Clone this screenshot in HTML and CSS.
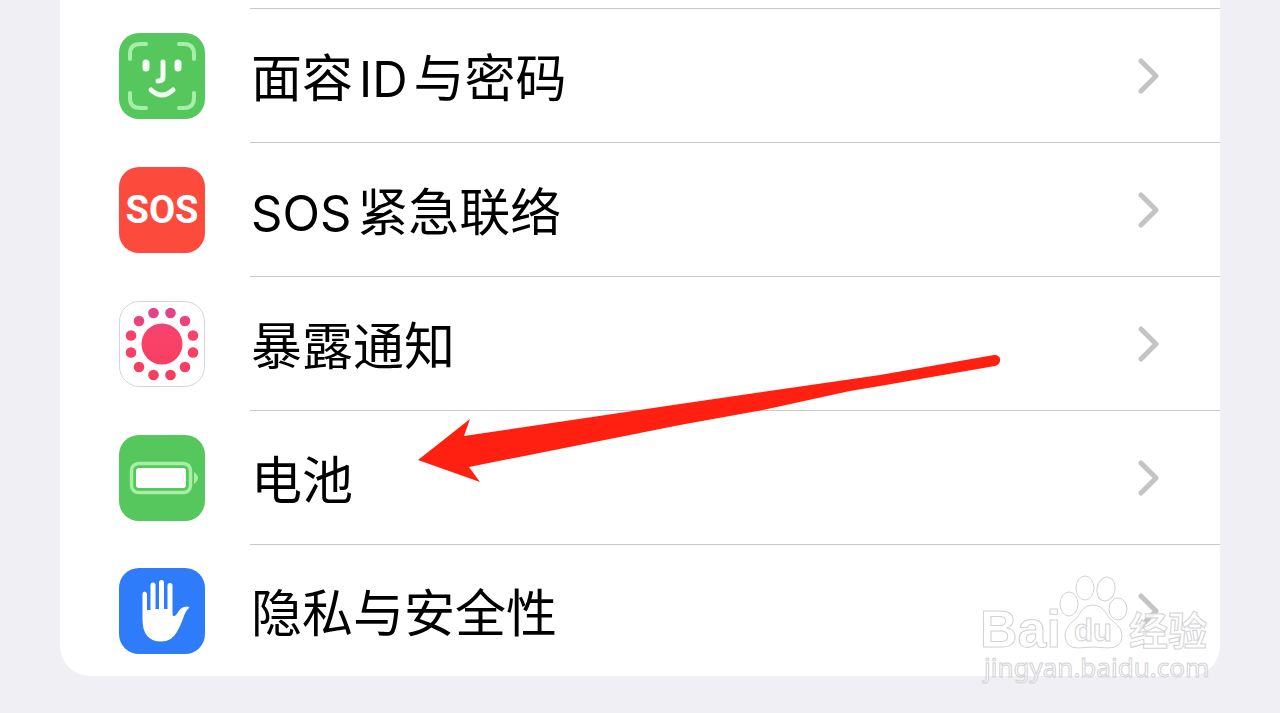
FILE: index.html
```
<!DOCTYPE html>
<html lang="zh-CN">
<head>
    <meta charset="UTF-8">
    <meta name="viewport" content="width=device-width, initial-scale=1.0">
    <title>设置</title>
    <link rel="stylesheet" href="styles.css">
</head>
<body>
<main class="settings">
    <ul class="list">
        <li>
            <a href="#faceid" class="row">
                <svg class="icon" viewBox="0 0 86 86" aria-hidden="true">
                    <rect width="86" height="86" rx="20" fill="#55c75c"/>
                    <g fill="none" stroke-linecap="round" stroke-width="4">
                        <path stroke="#a5f0a5" d="M11 26v-5q0-10 10-10h6M60 11h5q10 0 10 10v5M75 60v5q0 10-10 10h-5M27 75h-6q-10 0-10-10v-5"/>
                        <path stroke="#f4fff4" stroke-width="5" d="M32 57q11 10 22 0M44 29v15q0 4-5 4"/>
                        <path stroke="#f4fff4" stroke-width="7" d="M27 30v5M59 30v5"/>
                    </g>
                </svg>
                <span class="label">面容<span class="latin latin-mid">ID</span>与密码</span>
                <svg class="chevron" viewBox="0 0 22 36" aria-hidden="true"><path d="M3 3l15 15L3 33"/></svg>
            </a>
        </li>
        <li>
            <a href="#sos" class="row">
                <span class="icon icon-sos" aria-hidden="true">SOS</span>
                <span class="label"><span class="latin">SOS</span>紧急联络</span>
                <svg class="chevron" viewBox="0 0 22 36" aria-hidden="true"><path d="M3 3l15 15L3 33"/></svg>
            </a>
        </li>
        <li>
            <a href="#exposure" class="row">
                <svg class="icon" viewBox="0 0 86 86" aria-hidden="true">
                    <defs>
                        <linearGradient id="pink" gradientUnits="userSpaceOnUse" x1="0" y1="7" x2="0" y2="79">
                            <stop offset="0" stop-color="#dc4590"/>
                            <stop offset="0.4" stop-color="#fa4168"/>
                            <stop offset="1" stop-color="#f53d5e"/>
                        </linearGradient>
                    </defs>
                    <rect x="0.5" y="0.5" width="85" height="85" rx="20" fill="#fff" stroke="#d4d4d6"/>
                    <g fill="url(#pink)">
                        <circle cx="43" cy="43" r="20.5"/>
                        <circle cx="34.500" cy="12" r="5.300"/><circle cx="51.500" cy="12" r="5.300"/>
                        <circle cx="20" cy="20" r="5.300"/><circle cx="66" cy="20" r="5.300"/>
                        <circle cx="12" cy="34.500" r="5.300"/><circle cx="74" cy="34.500" r="5.300"/>
                        <circle cx="12" cy="51.500" r="5.300"/><circle cx="74" cy="51.500" r="5.300"/>
                        <circle cx="20" cy="66" r="5.300"/><circle cx="66" cy="66" r="5.300"/>
                        <circle cx="34.500" cy="74" r="5.300"/><circle cx="51.500" cy="74" r="5.300"/>
                    </g>
                </svg>
                <span class="label">暴露通知</span>
                <svg class="chevron" viewBox="0 0 22 36" aria-hidden="true"><path d="M3 3l15 15L3 33"/></svg>
            </a>
        </li>
        <li>
            <a href="#battery" class="row">
                <svg class="icon" viewBox="0 0 86 86" aria-hidden="true">
                    <rect width="86" height="86" rx="20" fill="#55c75c"/>
                    <rect x="12.5" y="28.5" width="59" height="29" rx="7" fill="none" stroke="#a5f0a5" stroke-width="3.500"/>
                    <rect x="17" y="33" width="50" height="20" rx="3" fill="#fff"/>
                    <path d="M75 37q4 3 4 6t-4 6z" fill="#a5f0a5"/>
                </svg>
                <span class="label">电池</span>
                <svg class="chevron" viewBox="0 0 22 36" aria-hidden="true"><path d="M3 3l15 15L3 33"/></svg>
            </a>
        </li>
        <li>
            <a href="#privacy" class="row row-last">
                <svg class="icon" viewBox="0 0 86 86" aria-hidden="true">
                    <rect width="86" height="86" rx="20" fill="#2e7cf9"/>
                    <path fill="#fff" d="M23.500 26q0-2.500 2-2.500t2.500 2.500v16h3.500V17q0-2.500 2.500-2.500t2.500 2.500v24h3.500V14.500q0-2.500 2.500-2.500t2.500 2.500v26.500h3.500V17.500q0-2.500 2.500-2.500t2.500 2.500v29q0 2 2 1.500 1.500-.5 3-3 3-5.500 7-6 3-1 5 .5-3 2-5 7-4 12-8 18-5 9-15 9-19 0-19-22z"/>
                </svg>
                <span class="label">隐私与安全性</span>
                <svg class="chevron" viewBox="0 0 22 36" aria-hidden="true"><path d="M3 3l15 15L3 33"/></svg>
            </a>
        </li>
    </ul>

    <!-- arrow pointing at the battery row -->
    <svg class="arrow" viewBox="0 0 582 128" aria-hidden="true">
        <path fill="#ff2011" d="M0 106L52 65 46 82 262 50 462 21 576 1C584 0 584 11 577 12L462 32 432 37 345 56 262 71 51 113 62 128z"/>
    </svg>

    <svg class="watermark" viewBox="0 0 240 120" role="img" aria-label="Baidu经验">
        <g class="mark">
            <ellipse cx="89" cy="30" rx="9" ry="12"/>
            <ellipse cx="105" cy="14" rx="9" ry="12"/>
            <ellipse cx="126" cy="15" rx="9" ry="12" transform="rotate(12 126 15)"/>
            <ellipse cx="138" cy="35" rx="9" ry="11"/>
            <path d="M113 31q-8 0-13 8-3 6-8 9-7 6-7 14 1 12 13 12 15-2 30 0 14 0 14-12 0-8-8-14-5-3-8-9-5-8-13-8z"/>
            <text class="brand" x="0" y="73">Bai</text>
            <text class="brand-du" x="94" y="67">du</text>
            <text class="brand-cn" x="149" y="71">经验</text>
            <text class="site" x="4" y="103">jingyan.baidu.com</text>
        </g>
    </svg>
</main>
</body>
</html>
```
FILE: styles.css
```
body {
    margin: 0;
    background-color: #efeff4;
    font-family: Inter, "Noto Sans CJK SC", sans-serif;
    color: #000;
}
.settings {
    position: relative;
    margin: 0 60px 36px;
}
.list {
    list-style: none;
    margin: 0;
    padding: 8px 0 0;
    background-color: #fff;
    border-radius: 0 0 30px 30px;
}
.row {
    display: flex;
    align-items: center;
    box-sizing: border-box;
    min-height: 134px;
    padding: 2px 60px 0 59px;
    gap: 46px;
    color: inherit;
    text-decoration: none;
    /* separator starts at the label, not under the icon */
    background: linear-gradient(#c9c9cb, #c9c9cb) 190px 0 / 100% 1px no-repeat;
}
.row-last {
    min-height: 132px;
}
.icon {
    flex: none;
    width: 86px;
    height: 86px;
}
.icon-sos {
    display: flex;
    align-items: center;
    justify-content: center;
    border-radius: 20px;
    background-color: #fc4a3c;
    color: #fff;
    font-family: Roboto, sans-serif;
    font-size: 38px;
    font-weight: bold;
}
.label {
    flex: 1;
    padding-top: 6px;
    font-size: 51px;
    line-height: 64px;
}
.latin {
    margin-right: 6px;
    font-size: 49px;
}
.latin-mid {
    margin-left: 6px;
}
.chevron {
    flex: none;
    width: 22px;
    height: 36px;
}
.chevron path {
    fill: none;
    stroke: #c4c4c6;
    stroke-width: 5;
    stroke-linecap: round;
    stroke-linejoin: round;
}
.arrow {
    position: absolute;
    top: 354px;
    left: 358px;
    width: 582px;
    height: 128px;
}
.watermark {
    position: absolute;
    right: 0;
    bottom: -18px;
    width: 240px;
    height: 120px;
}
.mark {
    fill: #fff;
    fill-opacity: 0.8;
    stroke: #d2d2d4;
    stroke-width: 1;
}
.brand {
    font: bold 52px "Liberation Sans", sans-serif;
}
.brand-du {
    font: bold 31px "Liberation Sans", sans-serif;
}
.brand-cn {
    font: bold 39px "Noto Sans CJK SC", sans-serif;
}
.site {
    font: 26px "Noto Sans", sans-serif;
}
```
